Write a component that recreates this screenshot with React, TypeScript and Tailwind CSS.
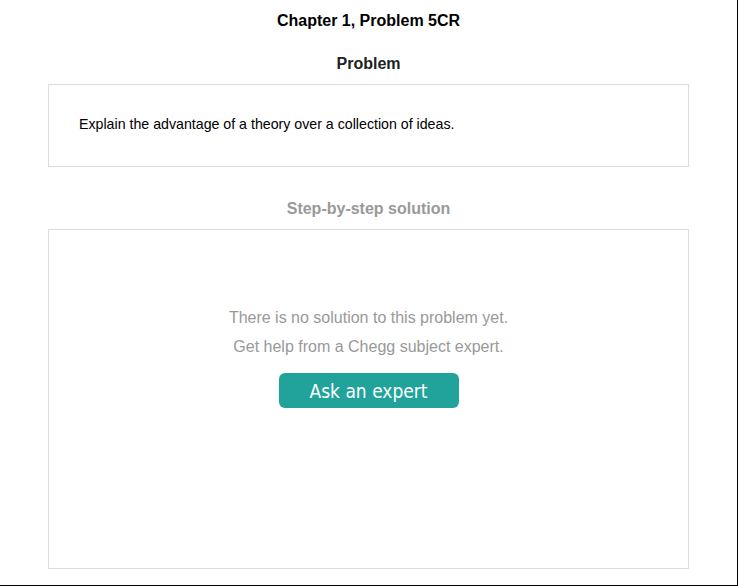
export default function App() {
  return (
    <div className="w-[738px] h-[586px] bg-white border-r border-b border-black font-['Liberation_Sans',Arial,sans-serif] overflow-hidden">
      <div className="w-[641px] ml-[48px]">
        <h1 className="pt-[11px] h-[42px] text-center text-[16px] leading-[20px] font-bold text-black">
          Chapter 1, Problem 5CR
        </h1>
        <h2 className="h-[42px] pt-[12px] text-center text-[16px] leading-[20px] font-bold text-[#222]">
          Problem
        </h2>
        <div className="h-[83px] border border-[#dcdcdc] pl-[30px] pt-[30px] text-[14.2px] leading-[18px] text-black">
          Explain the advantage of a theory over a collection of ideas.
        </div>
        <h2 className="h-[62px] pt-[32px] text-center text-[16px] leading-[20px] font-bold text-[#999]">
          Step-by-step solution
        </h2>
        <div className="h-[340px] border border-[#dcdcdc] flex flex-col items-center pt-[78px]">
          <p className="text-[16px] leading-[20px] text-[#999]">There is no solution to this problem yet.</p>
          <p className="mt-[9px] text-[16px] leading-[20px] text-[#999]">Get help from a Chegg subject expert.</p>
          <button className="mt-[16px] w-[180px] h-[35px] rounded-[6px] bg-[#21a39b] text-white text-[19px] leading-[37px] font-['DejaVu_Sans_Condensed','DejaVu_Sans',sans-serif]">
            Ask an expert
          </button>
        </div>
      </div>
    </div>
  )
}
